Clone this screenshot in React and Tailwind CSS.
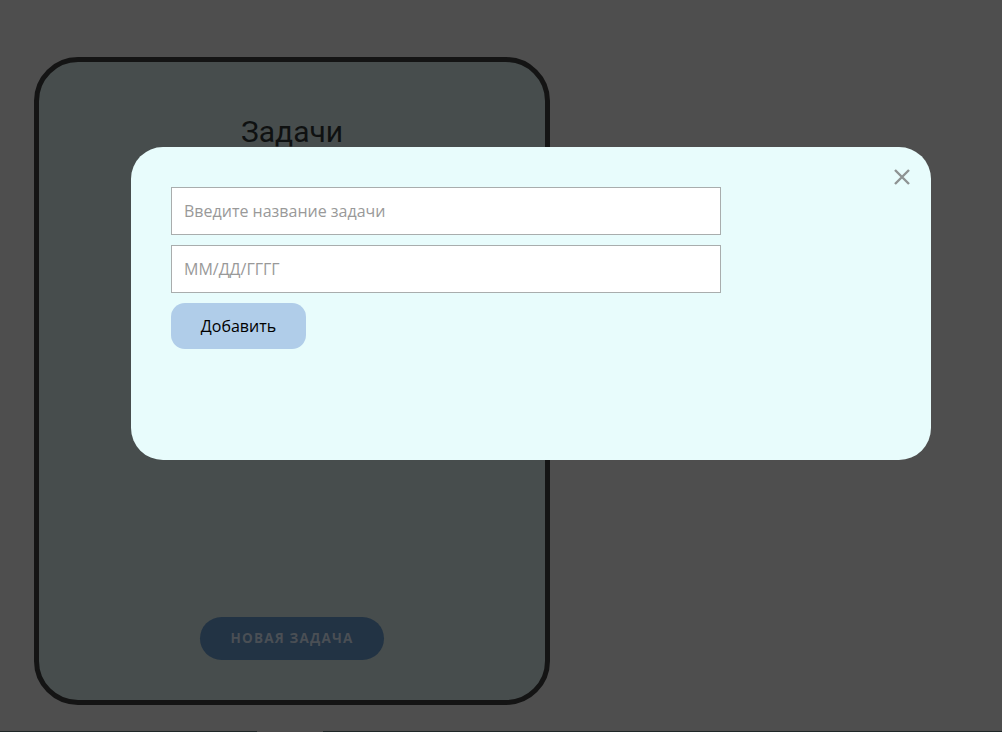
import React from "react";

export default function App() {
  return (
    <div className="relative flex h-[732px] w-[1002px] flex-col overflow-hidden bg-[#4e4e4e]" style={{ fontFamily: '"Open Sans", "Noto Sans", sans-serif' }}>
      <div className="flex-1 pl-[34px] pt-[57px]">
        <div className="flex h-[648px] w-[516px] flex-col items-center rounded-[44px] border-[5px] border-[#141414] bg-[#474d4d]">
          <h1 className="mt-[52px] text-[30px] leading-[36px] text-[#0f1111]" style={{ fontFamily: 'Roboto, "Noto Sans", sans-serif' }}>Задачи</h1>
          <div className="flex-1" />
          <button className="mb-[40px] h-[43px] w-[184px] rounded-full bg-[#223344] text-[13.5px] font-bold tracking-[1.2px] text-[#4a4f55]">
            НОВАЯ ЗАДАЧА
          </button>
        </div>
      </div>
      <div className="flex h-px w-full bg-[#1e2626]">
        <div className="ml-[257px] w-[66px] bg-[#4a4a4a]" />
      </div>

      <div className="absolute left-[131px] top-[147px] h-[313px] w-[800px] rounded-[32px] bg-[#e8fcfc] px-[40px] pt-[40px]">
        <button className="absolute right-[19px] top-[20px] flex h-[20px] w-[20px] items-center justify-center text-[#8e9393]">
          <svg width="18" height="18" viewBox="0 0 18 18" fill="none" stroke="currentColor" strokeWidth="2.4" strokeLinecap="butt">
            <path d="M2 2 L16 16 M16 2 L2 16" />
          </svg>
        </button>
        <div className="flex w-[550px] flex-col gap-[10px]">
          <input className="h-[48px] w-full border border-[#a9adad] bg-white px-[12px] text-[16px] text-black outline-none placeholder:text-[#999999]" placeholder="Введите название задачи" />
          <input className="h-[48px] w-full border border-[#a9adad] bg-white px-[12px] text-[16px] text-black outline-none placeholder:text-[#999999]" placeholder="ММ/ДД/ГГГГ" />
          <button className="h-[46px] w-[135px] rounded-[14px] bg-[#b0cde9] text-[16px] text-black">Добавить</button>
        </div>
      </div>
    </div>
  );
}
